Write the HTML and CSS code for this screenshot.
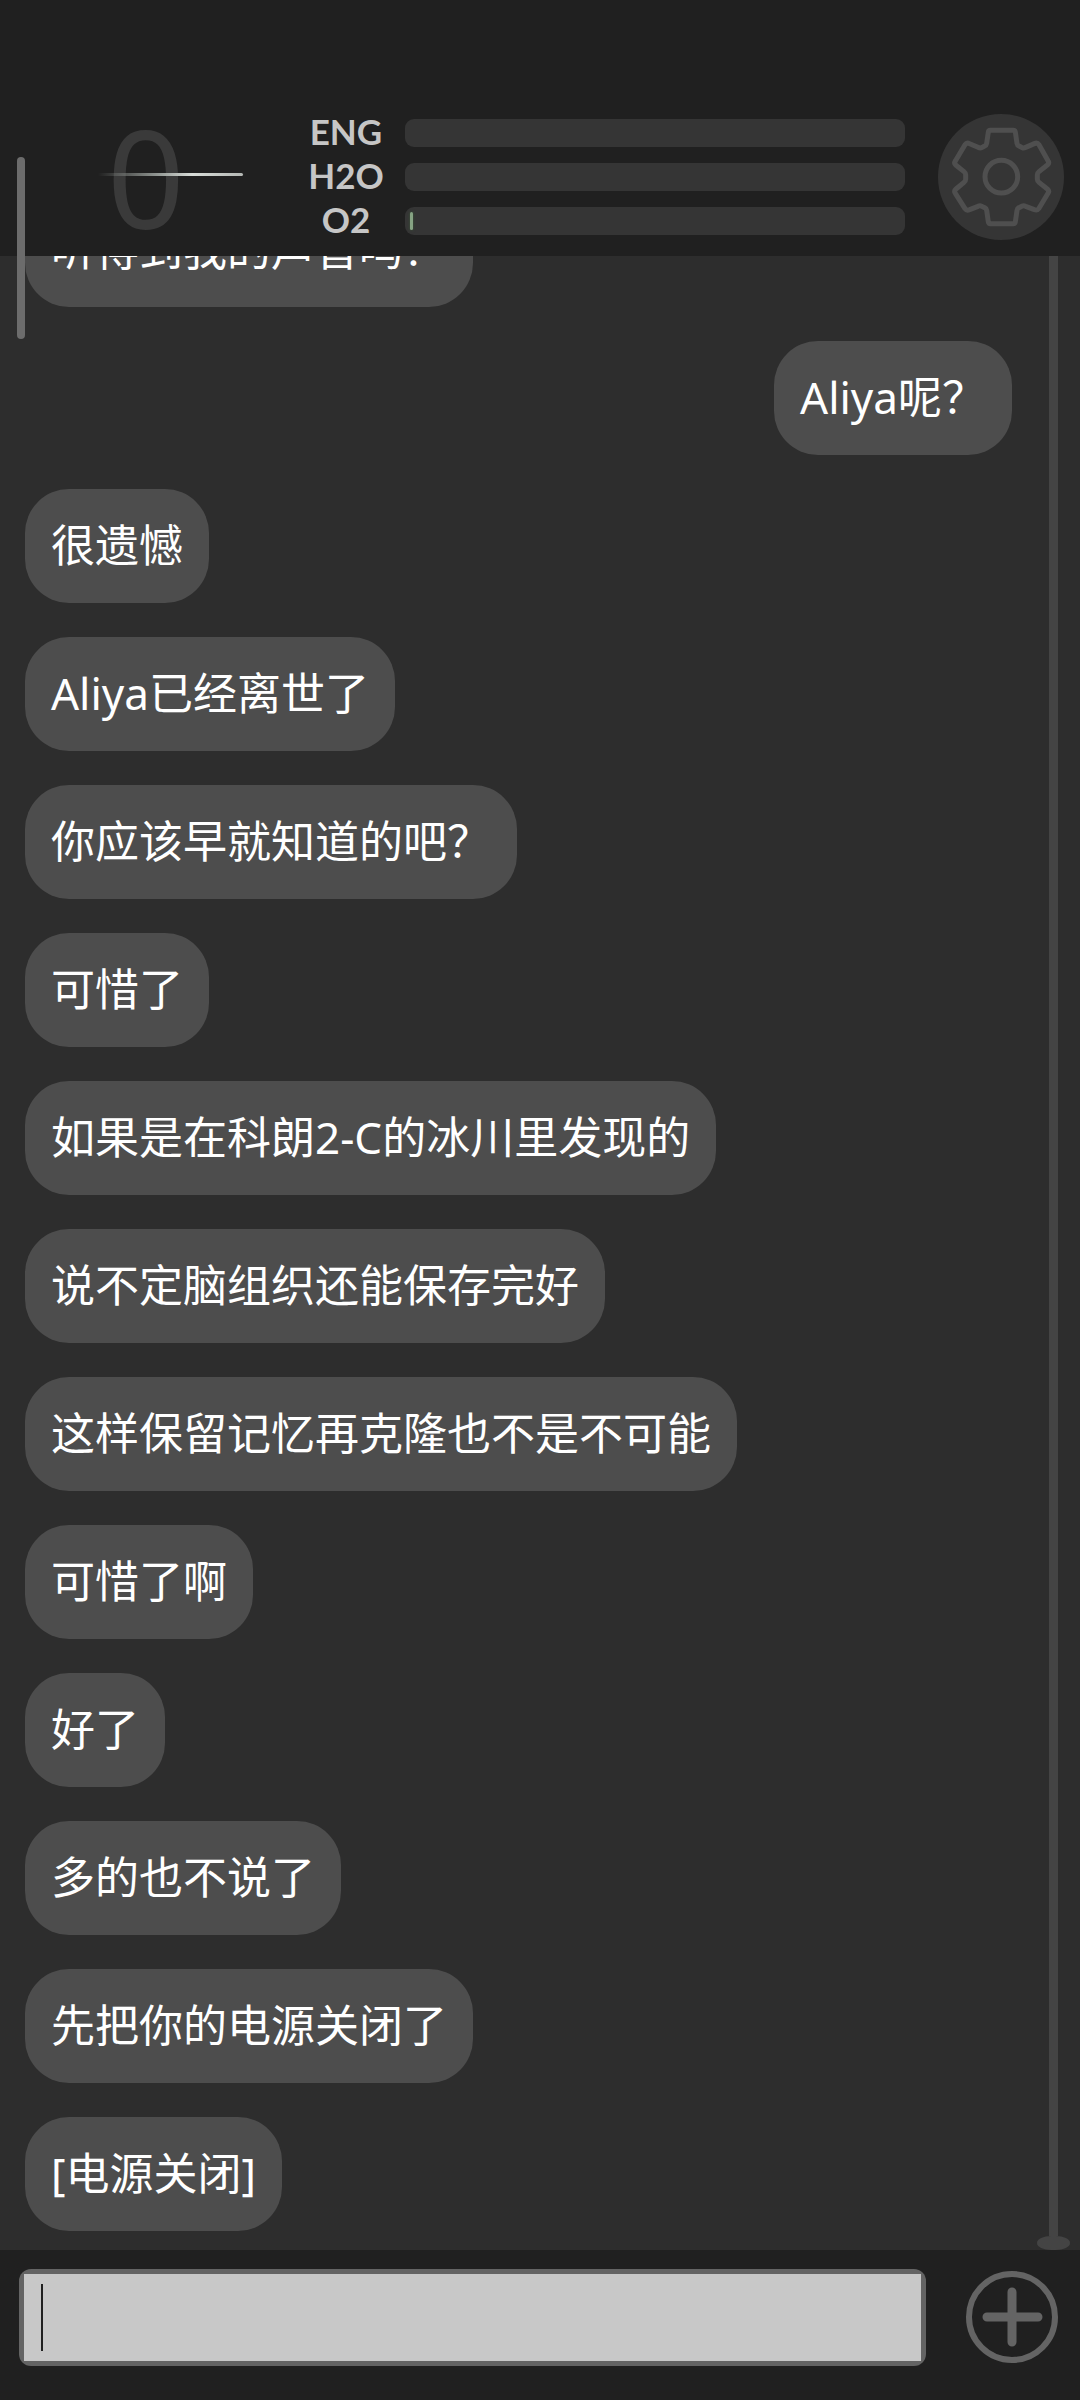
FILE: index.html
```html
<!DOCTYPE html>
<html lang="zh-CN">
<head>
<meta charset="utf-8">
<meta name="viewport" content="width=device-width, initial-scale=1">
<title>Aliya</title>
<link rel="stylesheet" href="styles.css">
</head>
<body>
<header class="topbar">
  <div class="score"><span class="score-value">0</span><span class="score-line"></span></div>
  <div class="meters">
    <div class="meter-row"><span class="meter-label" id="eng">ENG</span><div class="meter" role="meter" aria-labelledby="eng" aria-valuenow="0"></div></div>
    <div class="meter-row"><span class="meter-label" id="h2o">H2O</span><div class="meter" role="meter" aria-labelledby="h2o" aria-valuenow="0"></div></div>
    <div class="meter-row"><span class="meter-label" id="o2">O2</span><div class="meter" role="meter" aria-labelledby="o2" aria-valuenow="1"><span class="meter-fill"></span></div></div>
  </div>
  <button class="icon-button settings" type="button" aria-label="设置">
    <svg viewBox="174 72 378 378" width="126" height="126" fill="none" stroke="#4f4f4f" stroke-width="15" stroke-linejoin="round">
      <path d="M331 121H400Q405 121 406 126L411 160Q412 166 417 168L427 173Q431 175 437 172L463 161Q472 157 477 164L504 212Q509 219 502 225L477 245Q472 249 472 254V268Q472 273 477 277L502 297Q509 303 504 310L477 355Q472 362 463 359L437 349Q431 346 427 348L417 353Q412 355 411 361L406 396Q405 401 400 401H331Q326 401 325 396L320 361Q319 355 314 353L305 349Q300 346 294 349L269 359Q260 363 255 356L226 310Q221 303 228 297L252 277Q257 273 257 268V254Q257 249 252 245L228 226Q221 220 226 213L255 164Q260 157 269 161L294 172Q300 175 305 173L314 168Q319 166 320 160L325 126Q326 121 331 121Z"/>
      <circle cx="364" cy="260" r="49"/>
    </svg>
  </button>
</header>

<main class="chat">
  <div class="messages">
    <p class="bubble">听得到我的声音吗？</p>
    <p class="bubble bubble-own">Aliya呢？</p>
    <p class="bubble">很遗憾</p>
    <p class="bubble">Aliya已经离世了</p>
    <p class="bubble">你应该早就知道的吧？</p>
    <p class="bubble">可惜了</p>
    <p class="bubble">如果是在科朗2-C的冰川里发现的</p>
    <p class="bubble">说不定脑组织还能保存完好</p>
    <p class="bubble">这样保留记忆再克隆也不是不可能</p>
    <p class="bubble">可惜了啊</p>
    <p class="bubble">好了</p>
    <p class="bubble">多的也不说了</p>
    <p class="bubble">先把你的电源关闭了</p>
    <p class="bubble">[电源关闭]</p>
  </div>
  <div class="rail"><span class="rail-track"></span><span class="rail-foot"></span></div>
</main>

<form class="composer">
  <div class="field"><input class="field-input" type="text" aria-label="消息"><span class="caret"></span></div>
  <button class="icon-button" type="button" aria-label="添加">
    <svg viewBox="0 0 94 94" width="94" height="94" fill="none" stroke="#646464">
      <circle cx="47" cy="47" r="43" stroke-width="6"/>
      <path d="M47 22V72M22 47H73" stroke-width="9" stroke-linecap="round"/>
    </svg>
  </button>
</form>
<div class="side-handle"></div>
</body>
</html>
```
FILE: styles.css
```css
* {
  box-sizing: border-box;
}

body {
  position: relative;
  display: flex;
  flex-direction: column;
  height: 100vh;
  margin: 0;
  overflow: hidden;
  background: #2d2d2d;
  color: #fff;
  font-family: "Noto Sans", "Noto Sans CJK SC", sans-serif;
}

.topbar {
  display: flex;
  align-items: center;
  padding: 114px 16px 16px 98px;
  background: #202020;
}

.score {
  position: relative;
  flex: none;
  width: 145px;
  height: 126px;
  margin-right: 63px;
  padding-left: 9px;
}

.score-value {
  display: block;
  color: #3a3a3a;
  font-size: 136px;
  font-weight: 400;
  line-height: 126px;
}

.score-line {
  position: absolute;
  top: 59px;
  left: 0;
  width: 100%;
  height: 3px;
  border-radius: 2px;
  background: linear-gradient(90deg, rgba(200, 210, 200, 0), #8f9490 40%, #d8dcd8 65%, #b4b8b4);
}

.meters {
  display: flex;
  flex: 1;
  flex-direction: column;
  gap: 16px;
  margin-right: 33px;
}

.meter-row {
  display: flex;
  align-items: flex-start;
  gap: 19px;
  height: 28px;
}

.meter-label {
  flex: none;
  width: 80px;
  color: #c6c6c6;
  font-family: Lato, sans-serif;
  font-size: 35px;
  font-weight: 700;
  line-height: 24px;
  text-align: center;
}

.meter {
  flex: 1;
  height: 28px;
  padding: 5px;
  border-radius: 9px;
  background: #353535;
}

.meter-fill {
  display: block;
  width: 3px;
  height: 18px;
  border-radius: 2px;
  background: #86a383;
  box-shadow: 0 0 3px #3c5a3a;
}

.icon-button {
  display: block;
  flex: none;
  padding: 0;
  border: 0;
  border-radius: 50%;
  background: none;
}

.icon-button svg {
  display: block;
}

.settings {
  background: #353535;
}

.chat {
  display: flex;
  flex: 1;
  gap: 25px;
  min-height: 0;
  padding: 0 10px 0 25px;
  overflow: hidden;
}

.messages {
  display: flex;
  flex: 1;
  flex-direction: column;
  align-items: flex-start;
  justify-content: flex-end;
  gap: 34px;
  padding-bottom: 19px;
}

.bubble {
  flex: none;
  margin: 0;
  padding: 26px 26px 28px;
  border-radius: 44px;
  background: #4d4d4d;
  font-size: 44px;
  line-height: 60px;
}

.bubble-own {
  align-self: flex-end;
}

.rail {
  display: flex;
  flex: none;
  flex-direction: column;
  align-items: center;
  width: 33px;
}

.rail-track {
  flex: 1;
  width: 9px;
  background: #444;
}

.rail-foot {
  width: 33px;
  height: 14px;
  border-radius: 14px / 7px;
  background: #444;
}

.composer {
  display: flex;
  align-items: center;
  gap: 39px;
  height: 150px;
  padding: 0 21px 16px 19px;
  background: #202020;
}

.field {
  position: relative;
  flex: 1;
  padding: 5px;
  border-radius: 12px;
  background: #646464;
}

.field-input {
  display: block;
  width: 100%;
  height: 87px;
  padding: 0 17px;
  border: 0;
  border-radius: 0;
  outline: 0;
  background: #c8c8c8;
  color: #202020;
  font: inherit;
  font-size: 44px;
}

.caret {
  position: absolute;
  top: 15px;
  left: 22px;
  width: 2px;
  height: 67px;
  background: #202020;
}

.side-handle {
  position: absolute;
  top: 157px;
  left: 17px;
  width: 8px;
  height: 182px;
  border-radius: 4px;
  background: #6c6c6c;
}
```
